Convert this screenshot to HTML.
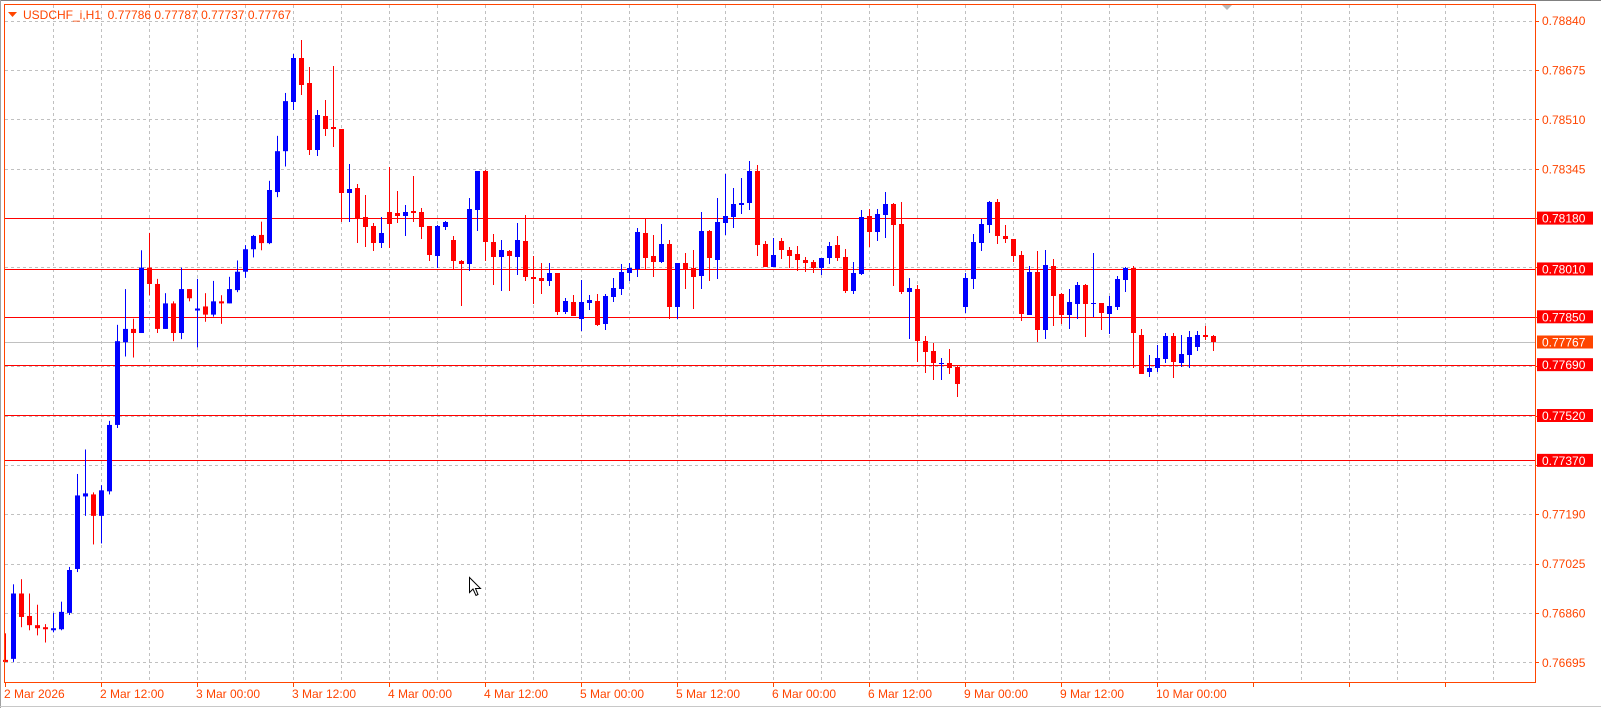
<!DOCTYPE html>
<html><head><meta charset="utf-8"><style>
html,body{margin:0;padding:0;background:#fff;width:1601px;height:708px;overflow:hidden}
svg{display:block}
text{font-family:"Liberation Sans",sans-serif;font-size:12px}
.pre{white-space:pre}
</style></head><body>
<svg id="s" width="1601" height="708" xmlns="http://www.w3.org/2000/svg">
<rect width="1601" height="708" fill="#fff"/>
<line x1="0" y1="0.5" x2="1601" y2="0.5" stroke="#808080"/>
<line x1="0.5" y1="0" x2="0.5" y2="708" stroke="#a0a0a0"/>
<line x1="0" y1="706.5" x2="1601" y2="706.5" stroke="#c8c8c8"/>
<g id="grid" stroke="#c0c0c0" stroke-dasharray="3,3" stroke-width="1"></g>
<g id="lines"></g>
<g id="candles"></g>
<rect x="4.5" y="4.5" width="1531" height="678" fill="none" stroke="#FF4500"/>
<polygon points="1222,5 1232,5 1227,10" fill="#b8b8b8"/>
<polygon points="8,12 17,12 12.5,17" fill="#FF4500"/>
<text x="23" y="19" fill="#FF4500" class="pre" xml:space="preserve">USDCHF_i,H1  0.77786 0.77787 0.77737 0.77767</text>
<path d="M469.5,577.5 L469.5,592.5 L473,589 L476,595.5 L478,594.5 L475.5,588.5 L480.5,588.5 Z" fill="#fff" stroke="#000" stroke-width="1"/>
<g id="axis" fill="#FF4500"></g>
</svg>
<script>
var NS="http://www.w3.org/2000/svg";
function el(p,t,a,txt){var e=document.createElementNS(NS,t);for(var k in a)e.setAttribute(k,a[k]);if(txt)e.textContent=txt;document.getElementById(p).appendChild(e);return e;}
var y0=20.7,st=49.35;
for(var k=0;k<=13;k++){var y=Math.round(y0+st*k)+0.5;el('grid','line',{x1:5,y1:y,x2:1535,y2:y});el('axis','rect',{x:1535,y:y-0.5,width:4,height:1});}
for(var k=1;k<=31;k++){var x=Math.round(5.3+48*k)+0.5;el('grid','line',{x1:x,y1:5,x2:x,y2:682});}
for(var k=0;k<=15;k++){var x=Math.round(5.3+96*k);el('axis','rect',{x:x,y:682,width:1,height:5});}
function py(p){return y0+(0.78840-p)/0.00165*st;}
var reds=["0.78180","0.78010","0.77850","0.77690","0.77520","0.77370"];
reds.forEach(function(p){var y=Math.round(py(+p))+0.5;el('lines','line',{x1:5,y1:y,x2:1535,y2:y,stroke:"#FF0000"});});
var cy=Math.round(py(0.77767))+0.5;el('lines','line',{x1:5,y1:cy,x2:1535,y2:cy,stroke:"#c0c0c0"});
var labs=["0.78840","0.78675","0.78510","0.78345"];
labs.forEach(function(p,i){el('axis','text',{x:1542,y:y0+st*i+4.5},p);});
["0.77190","0.77025","0.76860","0.76695"].forEach(function(p,i){el('axis','text',{x:1542,y:y0+st*(10+i)+4.5},p);});
reds.forEach(function(p){var y=py(+p);el('axis','rect',{x:1537,y:y-6.5,width:56,height:13,fill:"#FF0000"});el('axis','text',{x:1542,y:y+4.5,fill:"#fff"},p);});
el('axis','rect',{x:1537,y:cy-7,width:56,height:13,fill:"#FF4500"});el('axis','text',{x:1542,y:cy+4,fill:"#fff"},"0.77767");
var tl=["2 Mar 2026","2 Mar 12:00","3 Mar 00:00","3 Mar 12:00","4 Mar 00:00","4 Mar 12:00","5 Mar 00:00","5 Mar 12:00","6 Mar 00:00","6 Mar 12:00","9 Mar 00:00","9 Mar 12:00","10 Mar 00:00"];
tl.forEach(function(t,i){el('axis','text',{x:Math.round(5.3+96*i)-1,y:698},t);});
var A=[
"r 646 648 620 648","b 581 645 572 648","r 581 604 567 614","r 603 612 581 617","r 612 615 592 622","r 614 616 611 629","b 615 617 600 619","b 599 616 589 617","b 558 600 555 602","b 485 557 464 560","b 483 486 440 505","r 484 505 482 533","b 480 505 475 532","b 416 481 412 484","b 334 416 318 419","b 322 335 283 349","r 322 326 312 350","b 262 326 245 326","r 262 278 228 289","r 278 322 273 326","b 297 322 287 322","r 297 326 295 334","b 283 326 262 332","r 283 292 283 295","b 302 304 273 340","r 300 308 287 315","b 295 308 275 310","r 295 297 289 317","b 283 297 271 297","b 266 284 255 286","b 244 266 240 272","b 231 244 230 252","r 230 238 217 245","b 186 238 177 239","b 148 188 133 193","b 99 148 91 163"];
var B=[
"b 58 102 54 110","r 58 85 40 95","r 83 150 67 155","b 115 150 110 156","r 116 129 100 136","r 127 129 66 147","r 129 193 129 222","b 189 193 164 222","r 188 218 184 243","r 217 227 195 247","r 226 243 223 251","b 233 243 217 248","r 212 224 167 248","r 213 216 191 223","b 212 216 205 236","r 211 213 176 222","r 212 227 208 239","r 226 255 226 261","b 226 256 225 268","b 222 227 221 230","r 240 261 236 269","r 261 264 260 306","b 209 264 198 271","b 171 210 171 231","r 171 242 170 261","r 242 257 234 285","b 250 257 240 291","r 251 256 250 291","b 240 257 223 275","r 241 277 215 281","r 277 279 256 304","r 278 281 263 294","b 273 281 263 286","r 273 312 273 315","b 301 312 298 314","r 302 316 295 316","b 302 319 280 331","b 300 303 295 310","r 301 325 294 326",
"b 296 324 294 330","b 288 297 278 302","b 272 289 264 295","b 268 273 263 281","b 232 269 228 277","r 233 258 219 269","r 256 262 235 277","b 244 262 224 263","r 244 307 240 319","b 263 307 263 319","r 263 270 253 289","r 268 277 250 309","b 231 276 212 289","r 231 258 230 281","b 222 260 198 279","b 216 223 174 235","b 204 217 188 228","b 203 205 178 214","b 171 203 161 210","r 171 245 165 256","r 244 267 241 267","b 255 267 238 267","r 241 250 238 259","r 250 256 247 268","r 254 260 246 271","r 260 263 257 272","r 262 268 260 273","b 258 268 258 275","b 246 258 242 264","r 245 258 236 261","r 257 291 249 293","b 273 291 262 294","b 217 274 210 275","r 216 232 209 247","b 214 232 209 241","b 204 215 192 238","r 204 225 203 286",
"r 224 292 202 294","b 288 292 278 339","r 289 341 285 362","r 341 352 336 373","r 351 363 343 380","b 363 364 358 380","r 363 368 349 374","r 367 384 365 397","b 278 307 273 313","b 242 279 234 289","b 224 243 219 251","b 202 225 201 233","r 202 236 199 244","r 236 239 225 243","r 239 256 239 262","r 255 314 251 321","b 272 315 266 315","r 272 330 251 342","b 265 330 250 339","r 266 296 259 326","r 294 315 293 324","b 302 315 289 329","b 285 304 282 319","r 285 304 284 337","b 303 304 253 317","r 303 313 303 330","b 306 314 296 334","b 279 307 276 310","b 268 280 267 292","r 268 333 266 368","r 335 374 329 374","b 368 372 355 377","b 358 368 345 372","b 336 359 333 363","r 336 362 333 378","b 354 363 335 367","b 337 355 331 368","b 335 347 331 351","r 335 337 326 340","r 336 342 335 351"];
function draw(s,i,f){var v=s.split(" "),c=v[0]=="b"?"#0000FF":"#FF0000";var t=+v[1]*f,b=+v[2]*f,h=+v[3]*f,l=+v[4]*f;var x=5+8*i;
el('candles','rect',{x:x,y:h,width:1,height:Math.max(1,l-h),fill:c});
el('candles','rect',{x:x-2,y:t,width:5,height:Math.max(1,b-t),fill:c});}
A.forEach(function(s,i){draw(s,i,1.0215);});
B.forEach(function(s,i){draw(s,i+36,1);});
</script>
</body></html>
